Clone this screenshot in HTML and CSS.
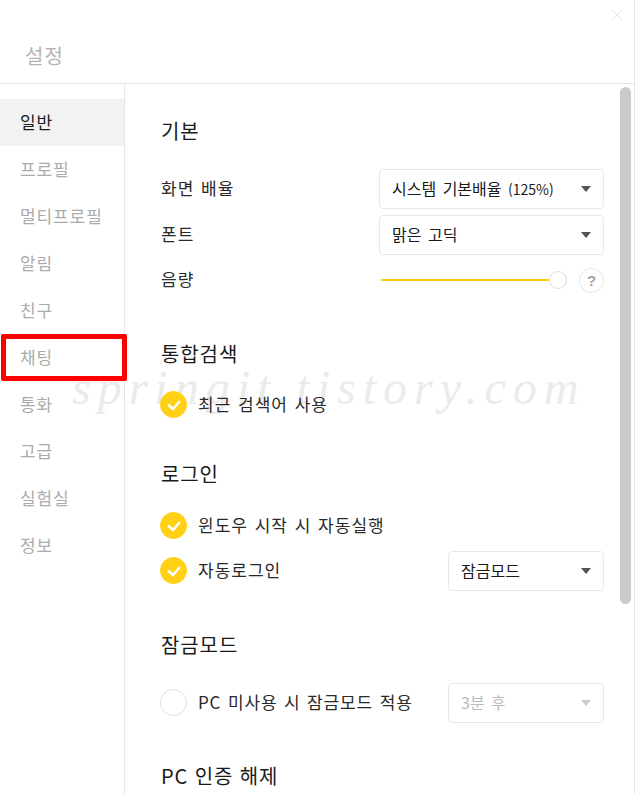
FILE: index.html
```html
<!DOCTYPE html>
<html lang="ko">
<head>
    <meta charset="UTF-8">
    <meta name="viewport" content="width=device-width, initial-scale=1.0">
    <title>설정</title>
    <link rel="stylesheet" href="styles.css">
</head>
<body>
    <div class="window">
        <div class="watermark">springit.tistory.com</div>

        <header class="title-bar">
            <h1>설정</h1>
            <svg class="close-icon" width="12" height="12" viewBox="0 0 12 12"><path d="M.5.5l11 11M11.5.5l-11 11" stroke="#e4e4e4" fill="none"/></svg>
        </header>

        <div class="body-row">
            <nav class="sidebar">
                <a class="nav-item active">일반</a>
                <a class="nav-item">프로필</a>
                <a class="nav-item">멀티프로필</a>
                <a class="nav-item">알림</a>
                <a class="nav-item">친구</a>
                <a class="nav-item">채팅</a>
                <a class="nav-item">통화</a>
                <a class="nav-item">고급</a>
                <a class="nav-item">실험실</a>
                <a class="nav-item">정보</a>
            </nav>

            <main class="content">
                <section class="group group-basic">
                    <h2>기본</h2>
                    <div class="row row-select">
                        <span class="label">화면 배율</span>
                        <div class="select select-wide"><span>시스템 기본배율 <span class="select-num">(125%)</span></span><i class="caret"></i></div>
                    </div>
                    <div class="row row-select">
                        <span class="label">폰트</span>
                        <div class="select select-wide"><span>맑은 고딕</span><i class="caret"></i></div>
                    </div>
                    <div class="row row-volume">
                        <span class="label">음량</span>
                        <div class="volume">
                            <div class="track"><div class="knob"></div></div>
                            <span class="help">?</span>
                        </div>
                    </div>
                </section>

                <section class="group group-search">
                    <h2>통합검색</h2>
                    <div class="check-row">
                        <span class="check on"><svg width="16" height="12" viewBox="0 0 16 12"><path d="M2 5.5l5 4.5 7-8" stroke="#fff" stroke-width="2.4" fill="none"/></svg></span>
                        <span class="label">최근 검색어 사용</span>
                    </div>
                </section>

                <section class="group group-login">
                    <h2>로그인</h2>
                    <div class="check-row">
                        <span class="check on"><svg width="16" height="12" viewBox="0 0 16 12"><path d="M2 5.5l5 4.5 7-8" stroke="#fff" stroke-width="2.4" fill="none"/></svg></span>
                        <span class="label">윈도우 시작 시 자동실행</span>
                    </div>
                    <div class="check-row">
                        <span class="check on"><svg width="16" height="12" viewBox="0 0 16 12"><path d="M2 5.5l5 4.5 7-8" stroke="#fff" stroke-width="2.4" fill="none"/></svg></span>
                        <span class="label">자동로그인</span>
                        <div class="select select-small"><span>잠금모드</span><i class="caret"></i></div>
                    </div>
                </section>

                <section class="group group-lock">
                    <h2>잠금모드</h2>
                    <div class="check-row">
                        <span class="check"></span>
                        <span class="label label-tight">PC 미사용 시 잠금모드 적용</span>
                        <div class="select select-small disabled"><span>3분 후</span><i class="caret"></i></div>
                    </div>
                </section>

                <section class="group group-auth">
                    <h2>PC 인증 해제</h2>
                </section>

                <div class="scrollbar"></div>
            </main>
        </div>

        <div class="highlight"></div>
    </div>
</body>
</html>
```

FILE: styles.css
```css
* {
    box-sizing: border-box;
}

html, body {
    margin: 0;
    padding: 0;
    height: 100%;
    overflow: hidden;
    background-color: #ffffff;
}

body {
    font-family: "Noto Sans CJK KR", "Noto Sans", sans-serif;
    color: #1e1e1e;
}

.window {
    position: relative;
    z-index: 0;
    width: 635px;
    height: 794px;
    border-right: 1px solid #e6e6e6;
    overflow: hidden;
    display: flex;
    flex-direction: column;
}

.title-bar {
    position: relative;
    height: 84px;
    flex: none;
    border-bottom: 1px solid #e6e6e6;
    padding: 42px 0 0 25px;
}

.title-bar h1 {
    margin: 0;
    font-size: 20px;
    line-height: 28px;
    font-weight: 400;
    letter-spacing: 1px;
    color: #b4b4b4;
}

.close-icon {
    position: absolute;
    top: 9px;
    right: 11px;
}

.body-row {
    flex: 1;
    display: flex;
    min-height: 0;
}

.sidebar {
    width: 125px;
    flex: none;
    border-right: 1px solid #e6e6e6;
    padding-top: 15px;
}

.nav-item {
    display: block;
    height: 47px;
    line-height: 46px;
    padding-left: 20px;
    font-size: 17px;
    letter-spacing: 0.9px;
    color: #ababab;
}

.nav-item.active {
    background-color: #f2f2f2;
    color: #1a1a1a;
}

.content {
    position: relative;
    flex: 1;
    padding: 33px 30px 0 36px;
    overflow: hidden;
}

.group h2 {
    margin: 0;
    font-size: 20px;
    line-height: 28px;
    font-weight: 400;
    letter-spacing: 0.9px;
    color: #1a1a1a;
}

.group-basic h2 { margin-bottom: 24px; }
.group-search { margin-top: 47px; }
.group-search h2 { margin-bottom: 23px; }
.group-login { margin-top: 42px; }
.group-login h2 { margin-bottom: 24px; }
.group-lock { margin-top: 47px; }
.group-lock h2 { margin-bottom: 30px; }
.group-auth { margin-top: 46px; }

.label {
    font-size: 17px;
    line-height: 24px;
    letter-spacing: 1px;
    word-spacing: 1px;
    padding-bottom: 2px;
    color: #2a2a2a;
}

.label-tight {
    letter-spacing: 0.85px;
}

.row {
    display: flex;
    align-items: center;
    justify-content: space-between;
}

.row-select {
    height: 40px;
    margin-bottom: 6px;
}

.row-volume {
    height: 26px;
    margin-top: 12px;
}

.select {
    height: 40px;
    border: 1px solid #e8e8e8;
    border-radius: 4px;
    padding: 0 12px 2px;
    display: flex;
    align-items: center;
    justify-content: space-between;
    font-size: 16px;
    word-spacing: 2px;
    color: #1a1a1a;
    background-color: #ffffff;
}

.select-num {
    font-size: 14px;
}

.select-wide { width: 225px; }
.select-small { width: 156px; margin-left: auto; }

.select.disabled {
    color: #bbbbbb;
}

.caret {
    width: 0;
    height: 0;
    margin-top: 2px;
    border-left: 5px solid transparent;
    border-right: 5px solid transparent;
    border-top: 6px solid #555555;
}

.select.disabled .caret {
    border-top-color: #cccccc;
}

.volume {
    width: 223px;
    display: flex;
    align-items: center;
    justify-content: space-between;
}

.track {
    position: relative;
    width: 175px;
    height: 2px;
    background-color: #ffcd0f;
}

.knob {
    position: absolute;
    right: -11px;
    top: -8px;
    width: 18px;
    height: 18px;
    border-radius: 50%;
    border: 1px solid #dcdcdc;
    background-color: #ffffff;
}

.help {
    width: 25px;
    height: 25px;
    border: 1px solid #e6e6e6;
    border-radius: 50%;
    text-align: center;
    font-family: "Liberation Sans", sans-serif;
    font-size: 15px;
    font-weight: 700;
    line-height: 23px;
    color: #a8a0a0;
}

.check-row {
    display: flex;
    align-items: center;
    height: 27px;
    gap: 11px;
}

.check-row + .check-row {
    margin-top: 18px;
}

.check {
    width: 27px;
    height: 27px;
    margin-left: -1px;
    flex: none;
    border-radius: 50%;
    border: 1px solid #dedede;
    display: flex;
    align-items: center;
    justify-content: center;
}

.check.on {
    background-color: #ffd014;
    border-color: #ffd014;
}

.scrollbar {
    position: absolute;
    top: 3px;
    right: 3px;
    width: 11px;
    height: 517px;
    border-radius: 6px;
    background-color: #cbcbcb;
}

.highlight {
    position: absolute;
    left: 1px;
    top: 334px;
    width: 126px;
    height: 47px;
    border: 5px solid #ff0000;
    border-radius: 2px;
}

.watermark {
    position: absolute;
    z-index: -1;
    left: 72px;
    top: 360px;
    font-family: "Liberation Serif", serif;
    font-style: italic;
    font-size: 48px;
    line-height: 56px;
    letter-spacing: 7px;
    color: #ebebeb;
    white-space: nowrap;
}
```
